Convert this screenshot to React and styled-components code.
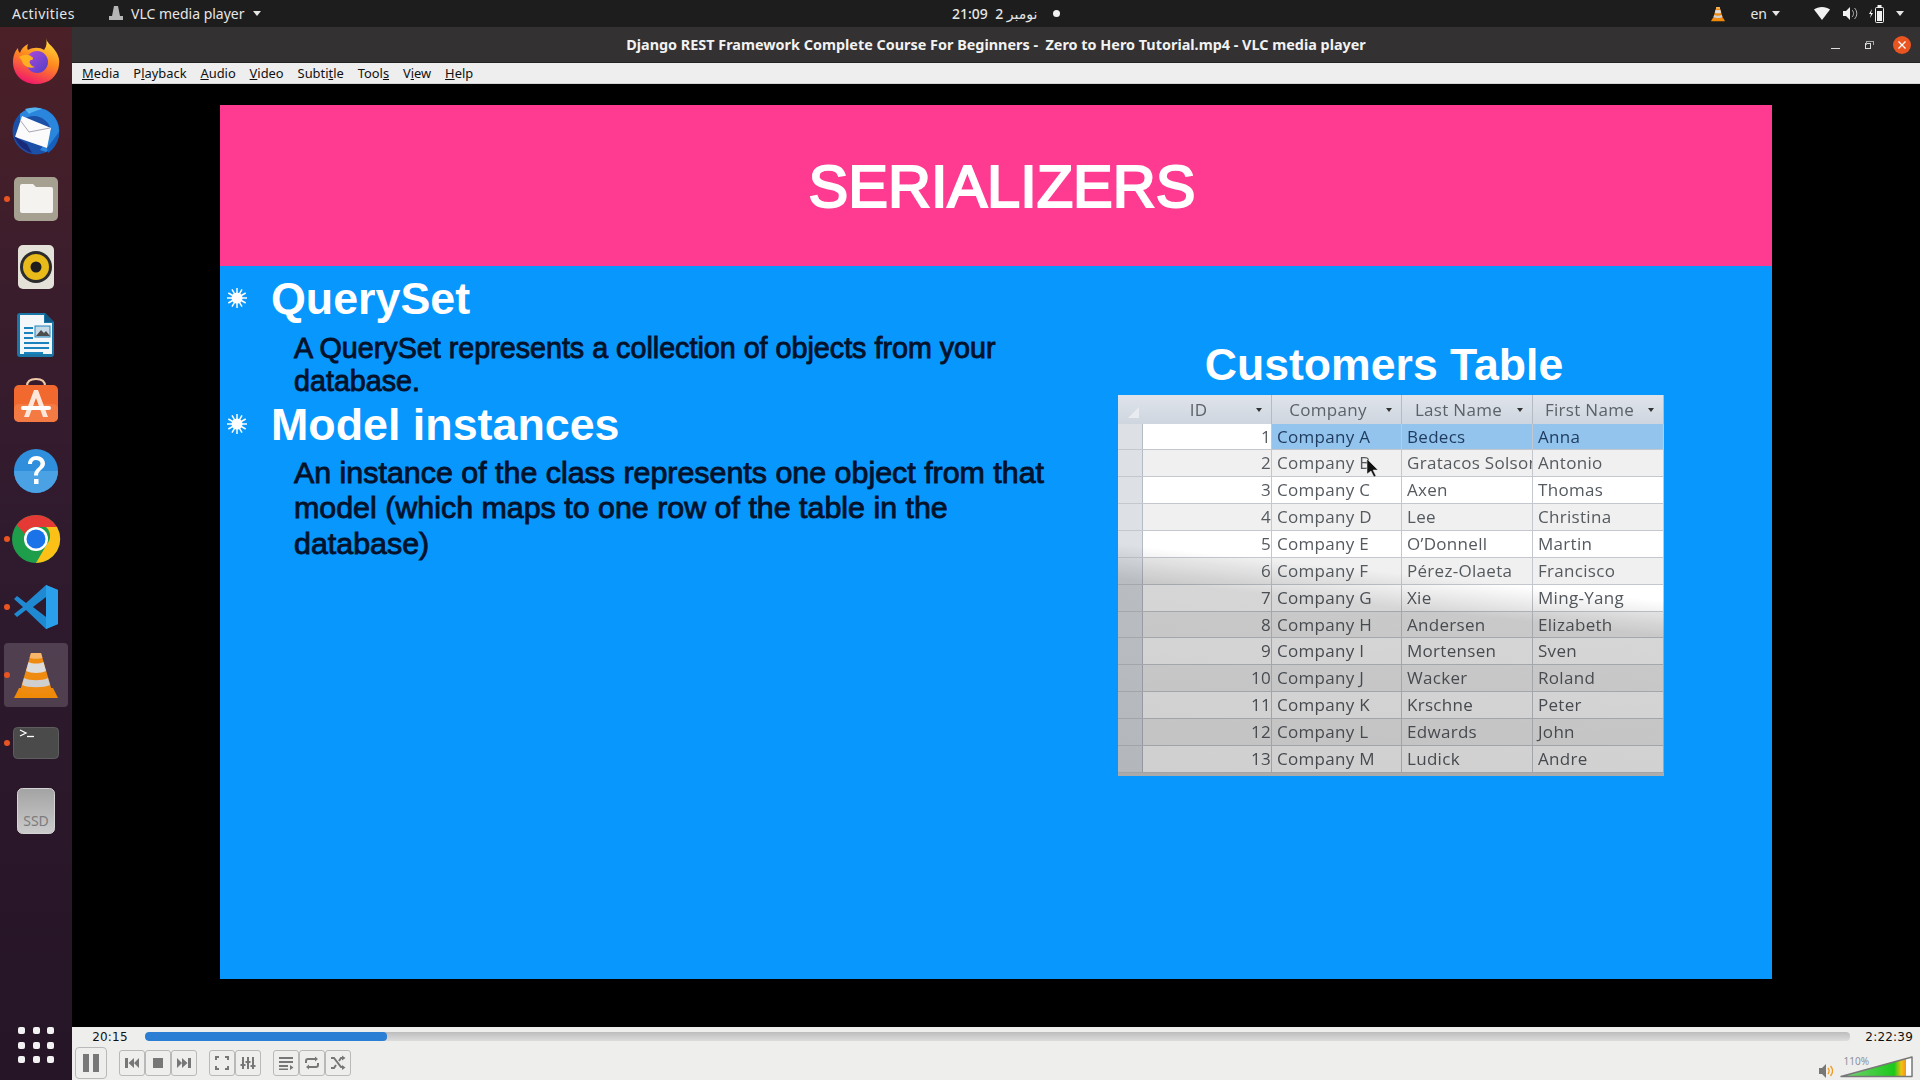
import React from "react";
import styled, { createGlobalStyle } from "styled-components";

const Global = createGlobalStyle`
  html, body { margin: 0; padding: 0; background: #000; }
  * { box-sizing: border-box; }
`;

const UI = `"Noto Sans", "DejaVu Sans", sans-serif`;

const Screen = styled.div`
  width: 1920px;
  height: 1080px;
  overflow: hidden;
  display: flex;
  flex-direction: column;
  font-family: ${UI};
`;

const TopBar = styled.div`
  height: 27px;
  flex: none;
  background: #1d1d1d;
  color: #e6e6e6;
  font-size: 14px;
  display: grid;
  grid-template-columns: 952px auto 1fr;
  align-items: center;
`;

const TopLeft = styled.div`
  display: flex;
  align-items: center;
  padding-left: 12px;
`;

const Activities = styled.span`
  width: 97px;
  letter-spacing: 0.45px;
`;

const AppName = styled.div`
  display: flex;
  align-items: center;
  gap: 8px;
`;

const Clock = styled.div`
  display: flex;
  align-items: center;
  font-weight: 500;
  font-size: 14px;
  white-space: pre;
`;

const ClockDot = styled.span`
  width: 7px;
  height: 7px;
  border-radius: 50%;
  background: #f2f2f2;
  margin-left: 16px;
`;

const Tray = styled.div`
  display: flex;
  align-items: center;
  justify-content: flex-end;
  padding-right: 16px;
`;

const Caret = styled.span`
  width: 0;
  height: 0;
  border-left: 4.5px solid transparent;
  border-right: 4.5px solid transparent;
  border-top: 5px solid #e6e6e6;
  margin-left: ${(p) => p.$left || 0}px;
`;

const TrayGap = styled.span`
  width: ${(p) => p.$w}px;
`;

const Body = styled.div`
  flex: 1;
  display: flex;
  min-height: 0;
`;

const Dock = styled.nav`
  width: 72px;
  flex: none;
  padding: 2px 0 1px;
  display: flex;
  flex-direction: column;
  background: linear-gradient(180deg, #4c2027 0%, #3a1d2c 25%, #2f1a2e 50%, #251526 100%);
`;

const DockItem = styled.div`
  position: relative;
  height: 68px;
  flex: none;
  display: flex;
  align-items: center;
  justify-content: center;
  &::before {
    content: "";
    position: absolute;
    inset: 2px 4px;
    border-radius: 4px;
    background: ${(p) => (p.$active ? "rgba(255,255,255,0.17)" : "transparent")};
  }
  &::after {
    content: "";
    display: ${(p) => (p.$running ? "block" : "none")};
    position: absolute;
    left: 4px;
    top: 31px;
    width: 6px;
    height: 6px;
    border-radius: 50%;
    background: #e95420;
  }
  svg {
    position: relative;
    overflow: visible;
  }
`;

const AppGrid = styled.div`
  margin-top: auto;
  height: 68px;
  flex: none;
  display: grid;
  grid-template-columns: repeat(3, 7px);
  grid-auto-rows: 7px;
  gap: 7.5px;
  justify-content: center;
  align-content: center;
`;

const GridDot = styled.span`
  background: #f2f2f2;
  border-radius: 2px;
`;

const Win = styled.main`
  flex: 1;
  display: flex;
  flex-direction: column;
  min-width: 0;
`;

const TitleBar = styled.div`
  height: 36px;
  flex: none;
  background: #333132;
  color: #f2f2f2;
  border-bottom: 1px solid #222;
  display: grid;
  grid-template-columns: 1fr auto 1fr;
  align-items: center;
`;

const TitleText = styled.div`
  grid-column: 2;
  font-size: 14.4px;
  font-weight: 700;
  white-space: pre;
`;

const WinButtons = styled.div`
  grid-column: 3;
  display: flex;
  align-items: center;
  justify-content: flex-end;
  padding-right: 9px;
`;

const MinBtn = styled.span`
  width: 9px;
  height: 1px;
  background: #ddd;
  margin: 8px 25px 0 0;
`;

const RestoreBtn = styled.span`
  position: relative;
  width: 6px;
  height: 6px;
  border: 1px solid #ddd;
  margin: 2px 22px 0 0;
  &::after {
    content: "";
    position: absolute;
    top: -3px;
    left: 0;
    width: 6px;
    height: 3px;
    border: 1px solid #aaa;
    border-bottom: none;
  }
`;

const CloseBtn = styled.span`
  width: 18px;
  height: 18px;
  border-radius: 50%;
  background: #e95420;
  display: flex;
  align-items: center;
  justify-content: center;
`;

const MenuBar = styled.div`
  height: 21px;
  flex: none;
  background: #eeeeee;
  border-bottom: 1px solid #d4d4d4;
  color: #111;
  font-size: 12.9px;
  padding-left: 10px;
  display: flex;
  align-items: center;
  gap: 13.9px;
`;

const Video = styled.div`
  flex: 1;
  background: #000;
  display: flex;
  align-items: center;
  justify-content: center;
  min-height: 0;
  padding-bottom: 27px;
`;

const Slide = styled.section`
  width: 1552px;
  height: 874px;
  background: #0897fd;
  display: flex;
  flex-direction: column;
  font-family: "Liberation Sans", Arial, sans-serif;
`;

const Banner = styled.header`
  height: 161px;
  flex: none;
  background: #fe3a91;
  color: #fff;
  display: flex;
  align-items: center;
  justify-content: center;
  padding: 2px 0 0 12px;
  font-size: 59.5px;
  -webkit-text-stroke: 2.2px #fff;
`;

const SlideBody = styled.div`
  flex: 1;
  display: grid;
  grid-template-columns: 898px 1fr;
`;

const Points = styled.div`
  padding: 4px 0 0 7px;
`;

const Point = styled.h2`
  margin: 0;
  display: flex;
  align-items: center;
  gap: 24px;
  color: #fff;
  font-size: 44.8px;
  line-height: 56px;
  font-weight: 700;
`;

const Para = styled.p`
  margin: ${(p) => p.$mt}px 0 ${(p) => p.$mb}px;
  padding-left: 67px;
  color: #03122a;
  font-size: ${(p) => p.$size}px;
  line-height: ${(p) => p.$lh}px;
  -webkit-text-stroke: 0.9px #03122a;
  white-space: pre;
`;

const TableSide = styled.div`
  padding-top: 74px;
`;

const TableTitle = styled.div`
  width: 546px;
  padding-right: 14px;
  text-align: center;
  color: #fff;
  font-size: 44.6px;
  font-weight: 700;
  line-height: 50px;
  margin-bottom: 4.6px;
`;

const Sheet = styled.div`
  position: relative;
  width: 546px;
  height: 381px;
  background: #d2d2d2;
  font-family: "Open Sans", sans-serif;
  font-size: 17px;
  letter-spacing: 0.3px;
  overflow: hidden;
  filter: blur(0.35px);
`;

const cols = "25px 129px 130px 131px 131px";

const HeadRow = styled.div`
  display: grid;
  grid-template-columns: ${cols};
  height: 29px;
  background: linear-gradient(180deg, #dfe4ec, #cfd5de);
  color: #5d6269;
`;

const HeadCell = styled.div`
  display: flex;
  align-items: center;
  justify-content: center;
  padding-right: 17px;
  position: relative;
  border-right: 1px solid #b5bbc5;
  &:first-child {
    border: none;
  }
  &::after {
    content: "";
    position: absolute;
    right: ${(p) => (p.$corner ? 4 : 9)}px;
    top: ${(p) => (p.$corner ? 12 : 13)}px;
    ${(p) =>
      p.$corner
        ? "border-left: 11px solid transparent; border-bottom: 11px solid #e8ebf0;"
        : "border-left: 3.5px solid transparent; border-right: 3.5px solid transparent; border-top: 4px solid #333;"}
  }
`;

const Row = styled.div`
  display: grid;
  grid-template-columns: ${cols};
  height: 26.85px;
  background: ${(p) => p.$bg};
  border-bottom: 1px solid #c4c8ce;
  color: #555a5f;
  line-height: 25px;
`;

const Gutter = styled.div`
  background: #dde1e6;
  border-right: 1px solid #b5bbc5;
`;

const Cell = styled.div`
  padding: 0 ${(p) => (p.$num ? 0 : 5)}px;
  text-align: ${(p) => (p.$num ? "right" : "left")};
  border-right: 1px solid #c4c8ce;
  overflow: hidden;
  white-space: nowrap;
  font-weight: 500;
  color: ${(p) => (p.$sel ? "#1f3a5c" : "inherit")};
  background: ${(p) => (p.$sel ? "#93c4ee" : "transparent")};
`;

const Shade = styled.div`
  position: absolute;
  inset: 0;
  pointer-events: none;
  mix-blend-mode: multiply;
  background: linear-gradient(186deg, rgba(255, 255, 255, 0) 47%, #d6d6d6 55%, #cfcfcf 100%);
`;

const Pointer = styled.svg`
  position: absolute;
  left: 248px;
  top: 64px;
`;

const Controls = styled.footer`
  height: 53px;
  flex: none;
  background: #eeeeed;
  padding: 3px 7px 0 3px;
  color: #111;
  font-size: 13px;
`;

const SeekRow = styled.div`
  display: flex;
  align-items: center;
  height: 13px;
`;

const TimeLabel = styled.span`
  width: ${(p) => p.$w}px;
  flex: none;
  text-align: ${(p) => p.$align};
  font-family: "DejaVu Sans", sans-serif;
  font-size: 12px;
  letter-spacing: 0.2px;
`;

const Seek = styled.div`
  flex: 1;
  height: 9px;
  border-radius: 4px;
  background: linear-gradient(180deg, #bdbdbd, #dcdcdc);
  margin: 0 15px 0 0;
  overflow: hidden;
`;

const SeekFill = styled.div`
  height: 100%;
  background: #2a7fd5;
  border-radius: 4px;
`;

const ButtonRow = styled.div`
  display: flex;
  align-items: center;
  height: 34px;
  margin-top: 3px;
`;

const Big = styled.button`
  width: 32px;
  height: 32px;
  padding: 0;
  border: 1px solid #b9b9b9;
  border-radius: 4px;
  background: #eeeeed;
  display: flex;
  align-items: center;
  justify-content: center;
  margin-right: 12px;
`;

const Group = styled.div`
  display: flex;
  margin-right: 12px;
`;

const Small = styled.button`
  width: 26px;
  height: 26px;
  padding: 0;
  border: 1px solid #b9b9b9;
  border-radius: 3px;
  background: #eeeeed;
  display: flex;
  align-items: center;
  justify-content: center;
`;

const Volume = styled.div`
  position: relative;
  margin-left: auto;
  display: flex;
  align-items: flex-end;
  gap: 7px;
  height: 30px;
`;

const VolumeText = styled.span`
  position: absolute;
  right: 44px;
  top: 6px;
  font-size: 10px;
  color: #8a93a0;
`;

const sizes = { width: 16, height: 16, viewBox: "0 0 16 16", fill: "#777" };
const lines = { width: 16, height: 16, viewBox: "0 0 16 16", fill: "none", stroke: "#777", strokeWidth: 2 };

const Firefox = () => (
  <svg width="48" height="48" viewBox="0 2 48 48">
    <defs>
      <linearGradient id="ff1" x1="0.7" y1="0" x2="0.3" y2="1">
        <stop offset="0" stopColor="#ffdd3a" />
        <stop offset="0.45" stopColor="#ff8a1f" />
        <stop offset="1" stopColor="#f0146e" />
      </linearGradient>
      <linearGradient id="ff2" x1="0" y1="0" x2="1" y2="1">
        <stop offset="0" stopColor="#b04ad8" />
        <stop offset="1" stopColor="#4f3fc8" />
      </linearGradient>
    </defs>
    <path d="M34 1c1 5 5 7 8 11 4 5 6 10 5 16-1 11-10 19-23 19C10 47 1 37 1 25c0-6 2-11 5-14 0 3 1 4 2 5 1-4 4-7 8-9-1 3-1 5 0 6 5-3 12-3 16 0 3-4 3-8 2-12z" fill="url(#ff1)" />
    <circle cx="25" cy="25" r="11" fill="url(#ff2)" />
    <path d="M7 20c5-3 10-3 13 0 2 1 1 3-1 3-3 1-1 6 4 7-6 2-12-1-13-6-1-2-2-3-3-4z" fill="#ffb020" />
  </svg>
);

const Thunderbird = () => (
  <svg width="50" height="50" viewBox="0 0 50 50">
    <circle cx="25" cy="25" r="23.5" fill="#1c4fa6" />
    <path d="M9 8C15 2 26 0 35 4c8 4 13 12 13 21 0 9-5 17-13 21l-6-2 6-8 5-12c-2-8-8-13-16-14-6 0-11 2-15 5z" fill="#2a86dc" />
    <path d="M14 3c6-2 12-2 17 0-5 1-10 3-13 5z" fill="#56b4f0" />
    <path d="M11 10l29 12-4 20L4 31z" fill="#fbfbfb" />
    <path d="M9 14l9 12 21-4" fill="none" stroke="#a8a8b4" strokeWidth="1" />
    <path d="M2 26c2 10 9 18 19 21l-5-9-13-8z" fill="#1b2a78" />
    <path d="M36 42l12-16c0 9-4 16-11 21z" fill="#1660bd" />
  </svg>
);

const Files = () => (
  <svg width="46" height="46" viewBox="0 0 46 46">
    <rect x="1" y="1" width="44" height="44" rx="5" fill="#a6a091" />
    <path d="M7 10a2 2 0 0 1 2-2h11l3 3h15a2 2 0 0 1 2 2v22a2 2 0 0 1-2 2H9a2 2 0 0 1-2-2z" fill="#f5f3ef" />
  </svg>
);

const Rhythmbox = () => (
  <svg width="38" height="46" viewBox="0 0 38 46">
    <rect x="1" y="1" width="36" height="44" rx="5" fill="#e4e1d8" />
    <circle cx="19" cy="23" r="16" fill="#2c2c2c" />
    <circle cx="19" cy="23" r="13" fill="#e8bb1a" />
    <circle cx="19" cy="23" r="5.5" fill="#1d1d1d" />
  </svg>
);

const Writer = () => (
  <svg width="38" height="46" viewBox="0 0 38 46">
    <path d="M3 1h25l9 9v32a3 3 0 0 1-3 3H3a3 3 0 0 1-3-3V4a3 3 0 0 1 3-3z" fill="#1a76a6" />
    <path d="M3 3h24v8h8v31H3z" fill="#f4f7f9" />
    <path d="M28 1l9 9h-9z" fill="#0f5a86" />
    <path d="M7 16h9M7 21h9M7 26h9M7 31h25M7 36h25M7 41h19" stroke="#1a82bd" strokeWidth="2" />
    <rect x="18" y="14" width="15" height="11" fill="#c5d9e6" stroke="#1a82bd" />
    <path d="M19 24l5-6 3 3 2-2 4 5z" fill="#4d4d4d" />
  </svg>
);

const AppCenter = () => (
  <svg width="46" height="50" viewBox="0 0 46 50">
    <path d="M14 8c0-5 4-7 9-7s9 2 9 7" fill="none" stroke="#efc9a8" strokeWidth="2" />
    <rect x="1" y="7" width="44" height="37" rx="5" fill="#f2692f" />
    <rect x="1" y="26" width="44" height="18" rx="5" fill="#f47a44" />
    <path d="M21 12h4l10 27h-5L23 20l-7 19h-5z" fill="#fde7da" />
    <rect x="8" y="28" width="30" height="4" rx="2" fill="#fff" />
  </svg>
);

const Help = () => (
  <svg width="46" height="46" viewBox="0 0 46 46">
    <circle cx="23" cy="23" r="22" fill="#2f8fdc" />
    <path d="M1 23h44a22 22 0 0 1-44 0z" fill="#4aa2e4" />
    <path d="M15 16c0-5 4-8 8.5-8s8.500 3 8.500 7.500c0 6-7 6-7 12h-4c0-7 6.500-7.500 6.500-12 0-2-2-3.500-4.500-3.500s-4 1.500-4 4z" fill="#fff" />
    <rect x="21" y="31" width="4.5" height="5" fill="#fff" />
  </svg>
);

const Chrome = () => (
  <svg width="50" height="50" viewBox="0 0 50 50">
    <circle cx="25" cy="25" r="24" fill="#1e9e4a" />
    <path d="M25 1a24 24 0 0 1 21 12H25a12 12 0 0 0-11 7L5.500 11A24 24 0 0 1 25 1z" fill="#e53935" />
    <path d="M46 13a24 24 0 0 1-21 36l11-19a12 12 0 0 0-1-17z" fill="#fbc116" />
    <circle cx="25" cy="25" r="12" fill="#fff" />
    <circle cx="25" cy="25" r="9.5" fill="#1a73e8" />
  </svg>
);

const VsCode = () => (
  <svg width="46" height="46" viewBox="0 0 46 46">
    <path d="M33 1l12 5v34l-12 5L13 26 4 33 1 30l9-7-9-8 3-3 9 7z" fill="#1f8ad2" />
    <path d="M33 1l12 5v34l-12 5z" fill="#2aa0ea" />
    <path d="M33 13L20 23l13 10z" fill="#2f1a2e" />
  </svg>
);

const Cone = ({ size = 50 }) => (
  <svg width={size} height={size} viewBox="0 0 50 50">
    <path d="M3 48l5-10h34l5 10z" fill="#ee8a07" />
    <path d="M20 3h10l11 38c-6 4-26 4-32 0z" fill="#f08b12" />
    <path d="M17.500 12c4 2 11 2 15 0l2.500 9c-5 2.500-15 2.500-20 0z" fill="#dcdcdc" />
    <path d="M13 28c6 3 18 3 24 0l2 7c-6 3-22 3-28 0z" fill="#cfcfcf" />
    <path d="M20 3h10l1.500 5c-3 1-10 1-13 0z" fill="#f7b66a" />
  </svg>
);

const Terminal = () => (
  <svg width="46" height="32" viewBox="0 0 46 32">
    <rect x="0.5" y="0.5" width="45" height="31" rx="4" fill="#4a4a4a" stroke="#5e5e5e" />
    <path d="M7 3l6 3-6 3" fill="none" stroke="#fff" strokeWidth="1.3" />
    <path d="M14 9.500h7" stroke="#fff" strokeWidth="1.3" />
  </svg>
);

const Ssd = () => (
  <svg width="38" height="46" viewBox="0 0 38 46">
    <defs>
      <linearGradient id="ssd" x1="0" y1="0" x2="0" y2="1">
        <stop offset="0" stopColor="#a3a3a3" />
        <stop offset="1" stopColor="#cbcbcb" />
      </linearGradient>
    </defs>
    <rect x="0.5" y="0.5" width="37" height="45" rx="5" fill="url(#ssd)" stroke="#d4d4d4" />
    <text x="19" y="38" textAnchor="middle" fontFamily="Noto Sans, sans-serif" fontSize="14" fill="#7c7c7c">SSD</text>
  </svg>
);

const dockApps = [
  { icon: <Firefox /> },
  { icon: <Thunderbird /> },
  { icon: <Files />, running: true },
  { icon: <Rhythmbox /> },
  { icon: <Writer /> },
  { icon: <AppCenter /> },
  { icon: <Help /> },
  { icon: <Chrome />, running: true },
  { icon: <VsCode />, running: true },
  { icon: <Cone />, running: true, active: true },
  { icon: <Terminal />, running: true },
  { icon: <Ssd /> },
];

const menus = [
  ["", "M", "edia"],
  ["P", "l", "ayback"],
  ["", "A", "udio"],
  ["", "V", "ideo"],
  ["Subti", "t", "le"],
  ["Tool", "s", ""],
  ["V", "i", "ew"],
  ["", "H", "elp"],
];

const customers = [
  ["1", "Company A", "Bedecs", "Anna"],
  ["2", "Company B", "Gratacos Solsona", "Antonio"],
  ["3", "Company C", "Axen", "Thomas"],
  ["4", "Company D", "Lee", "Christina"],
  ["5", "Company E", "O’Donnell", "Martin"],
  ["6", "Company F", "Pérez-Olaeta", "Francisco"],
  ["7", "Company G", "Xie", "Ming-Yang"],
  ["8", "Company H", "Andersen", "Elizabeth"],
  ["9", "Company I", "Mortensen", "Sven"],
  ["10", "Company J", "Wacker", "Roland"],
  ["11", "Company K", "Krschne", "Peter"],
  ["12", "Company L", "Edwards", "John"],
  ["13", "Company M", "Ludick", "Andre"],
];

const Burst = () => (
  <svg width="20" height="20" viewBox="0 0 20 20" stroke="#fff" strokeWidth="1.5">
    {Array.from({ length: 12 }).map((_, i) => (
      <line key={i} x1="10" y1="10" x2="10" y2="0" transform={`rotate(${i * 30} 10 10)`} />
    ))}
    <circle cx="10" cy="10" r="5.5" fill="#fff" stroke="none" />
  </svg>
);

const App = () => (
  <Screen>
    <Global />
    <TopBar>
      <TopLeft>
        <Activities>Activities</Activities>
        <AppName>
          <svg width="14" height="16" viewBox="0 0 14 16" fill="#b5b5b5">
            <path d="M5 0h4l2 10h3v4H0v-4h3z" />
          </svg>
          <span>VLC media player</span>
          <Caret />
        </AppName>
      </TopLeft>
      <Clock>
        <span>21:09  نومبر 2</span>
        <ClockDot />
      </Clock>
      <Tray>
        <Cone size={16} />
        <TrayGap $w={24} />
        <span>en</span>
        <Caret $left={5} />
        <TrayGap $w={34} />
        <svg width="16" height="13" viewBox="0 0 16 13" fill="#f2f2f2">
          <path d="M0 2.500C2 1 5 0 8 0s6 1 8 2.500L8 13z" />
        </svg>
        <TrayGap $w={13} />
        <svg width="15" height="13" viewBox="0 0 15 13" fill="#f2f2f2">
          <path d="M0 4h3l4-4v13l-4-4H0z" />
          <path d="M9 3c2 2 2 5 0 7M11.500 1c3 3 3 8 0 11" fill="none" stroke="#bbb" strokeWidth="1" />
        </svg>
        <TrayGap $w={11} />
        <svg width="15" height="18" viewBox="0 0 15 18" fill="#f2f2f2">
          <path d="M3 4L0 9h2l-1 4 3-5H2z" />
          <rect x="6.5" y="2.5" width="8" height="15" rx="1" fill="none" stroke="#f2f2f2" />
          <rect x="8.5" y="0" width="4" height="2" />
          <rect x="8" y="6" width="5" height="10" />
        </svg>
        <Caret $left={12} />
      </Tray>
    </TopBar>

    <Body>
      <Dock>
        {dockApps.map((app, i) => (
          <DockItem key={i} $running={app.running} $active={app.active}>
            {app.icon}
          </DockItem>
        ))}
        <AppGrid>
          {Array.from({ length: 9 }).map((_, i) => (
            <GridDot key={i} />
          ))}
        </AppGrid>
      </Dock>

      <Win>
        <TitleBar>
          <TitleText>
            {"Django REST Framework Complete Course For Beginners -  Zero to Hero Tutorial.mp4 - VLC media player"}
          </TitleText>
          <WinButtons>
            <MinBtn />
            <RestoreBtn />
            <CloseBtn>
              <svg width="10" height="10" viewBox="0 0 10 10" stroke="#fff" strokeWidth="1.3">
                <path d="M1.500 1.500l7 7M8.500 1.500l-7 7" />
              </svg>
            </CloseBtn>
          </WinButtons>
        </TitleBar>

        <MenuBar>
          {menus.map(([a, u, b]) => (
            <span key={a + u + b}>
              {a}
              <u>{u}</u>
              {b}
            </span>
          ))}
        </MenuBar>

        <Video>
          <Slide>
            <Banner>SERIALIZERS</Banner>
            <SlideBody>
              <Points>
                <Point>
                  <Burst />
                  QuerySet
                </Point>
                <Para $size={28.7} $lh={33} $mt={5.5} $mb={-1.5}>
                  {"A QuerySet represents a collection of objects from your\ndatabase."}
                </Para>
                <Point>
                  <Burst />
                  Model instances
                </Point>
                <Para $size={30.4} $lh={35.5} $mt={2.5} $mb={0}>
                  {"An instance of the class represents one object from that\nmodel (which maps to one row of the table in the\ndatabase)"}
                </Para>
              </Points>
              <TableSide>
                <TableTitle>Customers Table</TableTitle>
                <Sheet>
                  <HeadRow>
                    <HeadCell $corner />
                    <HeadCell>ID</HeadCell>
                    <HeadCell>Company</HeadCell>
                    <HeadCell>Last Name</HeadCell>
                    <HeadCell>First Name</HeadCell>
                  </HeadRow>
                  {customers.map(([id, company, last, first], i) => (
                    <Row key={id} $bg={i % 2 === 0 ? "#ffffff" : "#f0f0f0"}>
                      <Gutter />
                      <Cell $num>{id}</Cell>
                      <Cell $sel={i === 0}>{company}</Cell>
                      <Cell $sel={i === 0}>{last}</Cell>
                      <Cell $sel={i === 0}>{first}</Cell>
                    </Row>
                  ))}
                  <Shade />
                  <Pointer width="13" height="18" viewBox="0 0 13 18">
                    <path d="M1 0v15l4-3 3 6 2-1-3-6h5z" fill="#111" stroke="#eee" strokeWidth="0.5" />
                  </Pointer>
                </Sheet>
              </TableSide>
            </SlideBody>
          </Slide>
        </Video>

        <Controls>
          <SeekRow>
            <TimeLabel $w={70} $align="center">20:15</TimeLabel>
            <Seek>
              <SeekFill style={{ width: `${(20.25 / 142.65) * 100}%` }} />
            </Seek>
            <TimeLabel $w={48} $align="right">2:22:39</TimeLabel>
          </SeekRow>
          <ButtonRow>
            <Big>
              <svg width="18" height="20" viewBox="0 0 18 20" fill="#777">
                <rect x="1" y="1" width="6" height="18" />
                <rect x="11" y="1" width="6" height="18" />
              </svg>
            </Big>
            <Group>
              <Small>
                <svg {...sizes}>
                  <path d="M1 3h3v10H1zM4.500 8L10 3v10zM10 8l5-5v10z" />
                </svg>
              </Small>
              <Small>
                <svg {...sizes}>
                  <rect x="3" y="3" width="10" height="10" />
                </svg>
              </Small>
              <Small>
                <svg {...sizes}>
                  <path d="M15 3h-3v10h3zM11.500 8L6 3v10zM6 8L1 3v10z" />
                </svg>
              </Small>
            </Group>
            <Group>
              <Small>
                <svg {...sizes}>
                  <path d="M1 1h4v2H3v2H1zM11 1h4v4h-2V3h-2zM1 11h2v2h2v2H1zM13 11h2v4h-4v-2h2z" />
                </svg>
              </Small>
              <Small>
                <svg {...sizes}>
                  <path d="M2 2h2v12H2zM7 2h2v12H7zM12 2h2v12h-2zM0.500 9h5v2h-5zM5.500 6h5v2h-5zM10.500 10h5v2h-5z" />
                </svg>
              </Small>
            </Group>
            <Group>
              <Small>
                <svg {...sizes}>
                  <path d="M1 2h14v2H1zM1 6h14v2H1zM1 10h9v2H1zM1 13.500h9v1.500H1zM12 10l3.500 2.500-3.500 2.500z" />
                </svg>
              </Small>
              <Small>
                <svg {...lines}>
                  <path d="M2 8V6a2 2 0 0 1 2-2h8M14 8v2a2 2 0 0 1-2 2H4" />
                  <path d="M11 1.500L14 4l-3 2.500zM5 9.500L2 12l3 2.500z" fill="#777" stroke="none" />
                </svg>
              </Small>
              <Small>
                <svg {...lines}>
                  <path d="M1 3h3l7 9h2M1 13h3l2-3M9 6l2-3h2" />
                  <path d="M12 0.500L15.500 3 12 5.500zM12 10l3.500 2.500L12 15z" fill="#777" stroke="none" />
                </svg>
              </Small>
            </Group>
            <Volume>
              <svg width="14" height="14" viewBox="0 0 14 14">
                <path d="M0 4h3l4-4v14l-4-4H0z" fill="#777" />
                <path d="M9 4c1.500 2 1.500 4 0 6M11.500 2c2.500 3 2.500 7 0 10" fill="none" stroke="#f39a1e" strokeWidth="1.3" />
              </svg>
              <svg width="73" height="22" viewBox="0 0 73 22">
                <defs>
                  <linearGradient id="vol" x1="0" y1="0" x2="1" y2="0">
                    <stop offset="0" stopColor="#7ed07a" />
                    <stop offset="0.75" stopColor="#1bc91b" />
                    <stop offset="0.85" stopColor="#f5c010" />
                    <stop offset="0.91" stopColor="#f39a1e" />
                    <stop offset="0.911" stopColor="#fff" />
                  </linearGradient>
                </defs>
                <path d="M1 20.500L72 1v19.500z" fill="url(#vol)" stroke="#777" strokeWidth="1.5" strokeLinejoin="round" />
              </svg>
              <VolumeText>110%</VolumeText>
            </Volume>
          </ButtonRow>
        </Controls>
      </Win>
    </Body>
  </Screen>
);

export default App;
